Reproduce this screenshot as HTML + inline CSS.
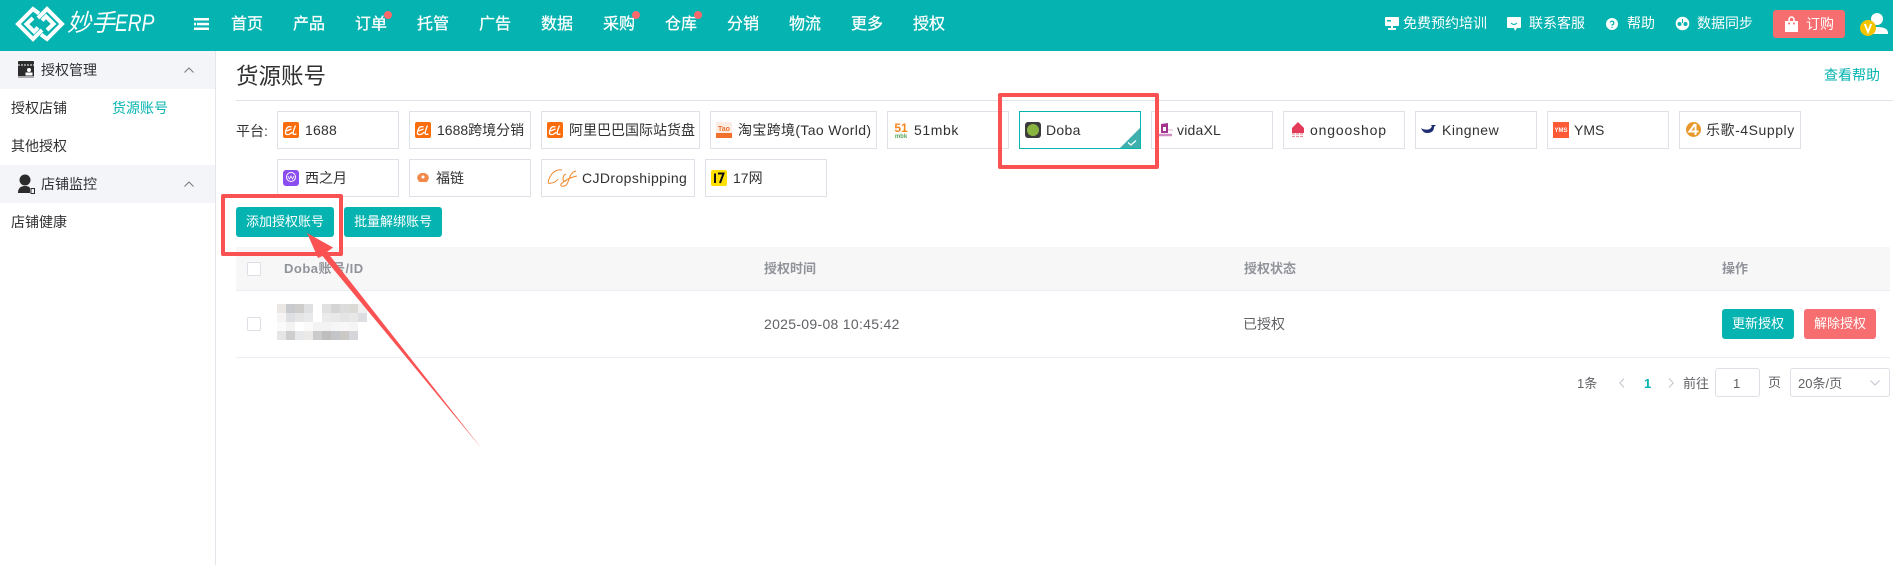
<!DOCTYPE html>
<html lang="zh"><head><meta charset="utf-8"><title>货源账号</title>
<style>
html,body{margin:0;padding:0;width:1893px;height:565px;overflow:hidden;background:#fff}
body{position:relative;font-family:"Liberation Sans","Noto Sans CJK SC",sans-serif;font-size:14px;color:#303133}
.a{position:absolute}
.t{position:absolute;white-space:nowrap;line-height:20px;height:20px}
.n{position:absolute;top:15px;color:#fff;font-size:16px;line-height:20px;white-space:nowrap;-webkit-text-stroke:.25px #fff}
.w{color:#fff}
.tile{position:absolute;height:36px;border:1px solid #dfe1e8;background:#fff}
.dot{position:absolute;width:8px;height:8px;border-radius:50%;background:#f7696b;top:11px}
.btn{position:absolute;height:30px;line-height:30px;text-align:center;color:#fff;font-size:13px;border-radius:3px;background:#05b3b0}
.g{color:#909399;font-weight:bold;font-size:13px}
.cb{position:absolute;width:12px;height:12px;border:1px solid #dcdfe6;border-radius:2px;background:#fff}
svg{position:absolute;overflow:visible}
</style></head><body>

<!-- header -->
<div class="a" style="left:0;top:0;width:1893px;height:51px;background:#05b3b0"></div>
<svg style="left:0;top:0" width="80" height="51" fill="none" stroke="#fff" stroke-width="4"><path d="M39 13.500 33 9 18 24 33 39 42 30 M33 18 26.500 24 34 31.500 38 27.500"/><path d="M41 34.500 47 39 62 24 47 9 38 18 M47 30 53.500 24 46 16.500 42 20.500"/></svg>
<div class="t w" style="left:67px;top:10px;height:28px;line-height:28px;font-size:24px;font-style:italic">妙手<span style="display:inline-block;transform:scaleX(.8);transform-origin:0 50%;font-size:24px">ERP</span></div>
<svg style="left:194px;top:18px" width="15" height="12" fill="#fff"><rect x="0" y="0" width="15" height="2.500"/><rect x="3" y="4.800" width="12" height="2.500"/><rect x="0" y="4.800" width="2" height="2.500"/><rect x="0" y="9.500" width="15" height="2.500"/></svg>
<div class="n" style="left:231px">首页</div><div class="n" style="left:293px">产品</div><div class="n" style="left:355px">订单</div><div class="n" style="left:417px">托管</div><div class="n" style="left:479px">广告</div><div class="n" style="left:541px">数据</div><div class="n" style="left:603px">采购</div><div class="n" style="left:665px">仓库</div><div class="n" style="left:727px">分销</div><div class="n" style="left:789px">物流</div><div class="n" style="left:851px">更多</div><div class="n" style="left:913px">授权</div>
<div class="dot" style="left:384px"></div><div class="dot" style="left:632px"></div><div class="dot" style="left:694px"></div>

<svg style="left:1385px;top:17px" width="14" height="13" fill="#fff"><rect x="0" y="0" width="14" height="9" rx="1"/><rect x="6" y="9" width="2" height="2"/><rect x="3" y="11" width="8" height="2"/><rect x="2" y="3" width="4" height="1.500" fill="#05b3b0"/></svg>
<div class="t w" style="left:1403px;top:13px">免费预约培训</div>
<svg style="left:1507px;top:17px" width="14" height="14" fill="#fff"><path d="M1 0H13A1 1 0 0 1 14 1V10A1 1 0 0 1 13 11H10L8 14 7 11H1A1 1 0 0 1 0 10V1A1 1 0 0 1 1 0Z"/><path d="M4 6Q7 9 10 6" stroke="#05b3b0" stroke-width="1.200" fill="none"/></svg>
<div class="t w" style="left:1529px;top:13px">联系客服</div>
<svg style="left:1606px;top:18px" width="12" height="12"><circle cx="6" cy="6" r="6" fill="#fff"/><path d="M4.300 4.500A1.800 1.800 0 1 1 6 6.800V7.500M6 8.800V10" stroke="#05b3b0" stroke-width="1.200" fill="none"/></svg>
<div class="t w" style="left:1627px;top:13px">帮助</div>
<svg style="left:1675px;top:17px" width="15" height="14"><circle cx="7.500" cy="6.500" r="6.800" fill="#fff"/><circle cx="4.500" cy="7" r="2" fill="#05b3b0"/><circle cx="10.500" cy="7" r="2" fill="#05b3b0"/><path d="M7.500 2V6" stroke="#05b3b0" stroke-width="1"/></svg>
<div class="t w" style="left:1697px;top:13px">数据同步</div>
<div class="a" style="left:1773px;top:10px;width:72px;height:28px;background:#f76e70;border-radius:3px"></div>
<svg style="left:1785px;top:17px" width="13" height="15"><path d="M0 4H13V15H0Z" fill="#fff"/><path d="M4 6V2.500A2.500 2.500 0 0 1 9 2.500V6" stroke="#fff" stroke-width="1.500" fill="none"/><circle cx="4" cy="6.500" r="1" fill="#f76e70"/><circle cx="9" cy="6.500" r="1" fill="#f76e70"/></svg>
<div class="t w" style="left:1806px;top:14px">订购</div>
<svg style="left:1859px;top:12px" width="30" height="26"><circle cx="18" cy="7" r="6" fill="#fff"/><path d="M10 21Q10 15 18 15Q29 15 29 21V22H10Z" fill="#fff"/><circle cx="9" cy="16" r="8" fill="#f5c400"/><path d="M5.800 12 9 20 12.200 12" stroke="#fff" stroke-width="1.800" fill="none"/></svg>

<!-- sidebar -->
<div class="a" style="left:215px;top:51px;width:1px;height:514px;background:#e3e5ea"></div>
<div class="a" style="left:0;top:51px;width:215px;height:38px;background:#f4f5f9"></div>
<div class="a" style="left:0;top:165px;width:215px;height:38px;background:#f4f5f9"></div>
<svg style="left:18px;top:61px" width="16" height="17"><rect width="16" height="17" rx="1" fill="#2b2b2b"/><path d="M0 4H16" stroke="#fff" stroke-dasharray="2 1" stroke-width="1"/><circle cx="11" cy="9" r="2" fill="#fff"/><rect x="7.500" y="11.500" width="7" height="3" fill="#fff"/><rect y="15" width="16" height="2" fill="#aaa"/></svg>
<div class="t" style="left:41px;top:60px;color:#303133">授权管理</div>
<svg style="left:184px;top:67px" width="10" height="6" fill="none" stroke="#777"><path d="M.5 5.500 5 1 9.500 5.500"/></svg>
<div class="t" style="left:11px;top:98px">授权店铺</div>
<div class="t" style="left:112px;top:98px;color:#05b3b0">货源账号</div>
<div class="t" style="left:11px;top:136px">其他授权</div>
<svg style="left:17px;top:174px" width="18" height="20"><circle cx="8" cy="6" r="5.500" fill="#2b2b2b"/><path d="M1 19Q1 12 8 12Q12 12 13 14V19Z" fill="#2b2b2b"/><rect x="14" y="14.500" width="3.500" height="5" fill="none" stroke="#2b2b2b"/></svg>
<div class="t" style="left:41px;top:174px">店铺监控</div>
<svg style="left:184px;top:181px" width="10" height="6" fill="none" stroke="#777"><path d="M.5 5.500 5 1 9.500 5.500"/></svg>
<div class="t" style="left:11px;top:212px">店铺健康</div>

<!-- title -->
<div class="t" style="left:236px;top:62px;height:30px;line-height:30px;font-size:22.500px;color:#303133">货源账号</div>
<div class="t" style="left:1824px;top:65px;color:#05b3b0">查看帮助</div>
<div class="a" style="left:236px;top:100px;width:1657px;height:1px;background:#e1e3ea"></div>

<!-- platforms -->
<div class="t" style="left:236px;top:121px">平台:</div>
<div class="tile" style="left:277px;top:111px;width:120px"></div>
<div class="tile" style="left:409px;top:111px;width:120px"></div>
<div class="tile" style="left:541px;top:111px;width:157px"></div>
<div class="tile" style="left:710px;top:111px;width:165px"></div>
<div class="tile" style="left:887px;top:111px;width:120px"></div>
<div class="tile" style="left:1019px;top:111px;width:120px;border-color:#05b3b0"></div>
<div class="tile" style="left:1151px;top:111px;width:120px"></div>
<div class="tile" style="left:1283px;top:111px;width:120px"></div>
<div class="tile" style="left:1415px;top:111px;width:120px"></div>
<div class="tile" style="left:1547px;top:111px;width:120px"></div>
<div class="tile" style="left:1679px;top:111px;width:120px"></div>
<div class="tile" style="left:277px;top:159px;width:120px"></div>
<div class="tile" style="left:409px;top:159px;width:120px"></div>
<div class="tile" style="left:541px;top:159px;width:152px"></div>
<div class="tile" style="left:705px;top:159px;width:120px"></div>

<svg style="left:283px;top:122px" width="16" height="16"><rect width="16" height="16" rx="2" fill="#fb6d0b"/><path d="M8.500 5Q4.500 3.500 3 8T4 12.500Q7 13 9 10M3.500 9 8.500 7M12.500 3.500Q10.500 8 10 11.500Q10.500 13 13.500 12" stroke="#fff" stroke-width="1.300" fill="none"/></svg>
<div class="t" style="left:305px;top:120px;letter-spacing:.2px">1688</div>
<svg style="left:415px;top:122px" width="16" height="16"><rect width="16" height="16" rx="2" fill="#fb6d0b"/><path d="M8.500 5Q4.500 3.500 3 8T4 12.500Q7 13 9 10M3.500 9 8.500 7M12.500 3.500Q10.500 8 10 11.500Q10.500 13 13.500 12" stroke="#fff" stroke-width="1.300" fill="none"/></svg>
<div class="t" style="left:437px;top:120px">1688跨境分销</div>
<svg style="left:547px;top:122px" width="16" height="16"><rect width="16" height="16" rx="2" fill="#fb6d0b"/><path d="M8.500 5Q4.500 3.500 3 8T4 12.500Q7 13 9 10M3.500 9 8.500 7M12.500 3.500Q10.500 8 10 11.500Q10.500 13 13.500 12" stroke="#fff" stroke-width="1.300" fill="none"/></svg>
<div class="t" style="left:569px;top:120px">阿里巴巴国际站货盘</div>
<svg style="left:716px;top:122px" width="16" height="16"><rect width="16" height="16" fill="#fdece3"/><text x="8" y="9" font-size="7" text-anchor="middle" fill="#f0702c" font-family="Liberation Sans" font-weight="bold">Tao</text><rect y="11" width="16" height="5" fill="#f0702c"/></svg>
<div class="t" style="left:738px;top:120px;letter-spacing:.35px">淘宝跨境(Tao World)</div>
<svg style="left:894px;top:122px" width="14" height="16"><text x="7" y="10" font-size="12" text-anchor="middle" fill="#f5861f" font-family="Liberation Sans" font-weight="bold">51</text><text x="7" y="16" font-size="6" text-anchor="middle" fill="#58a55c" font-family="Liberation Sans" font-weight="bold">mbk</text></svg>
<div class="t" style="left:914px;top:120px;letter-spacing:.6px">51mbk</div>
<svg style="left:1025px;top:122px" width="16" height="16"><rect width="16" height="16" rx="3" fill="#3c3c3c"/><circle cx="8" cy="8" r="6" fill="#8ab540"/></svg>
<div class="t" style="left:1046px;top:120px;letter-spacing:.3px">Doba</div>
<svg style="left:1120px;top:128px" width="20" height="20"><path d="M20 0V20H0Z" fill="#3fb0ae"/><path d="M8 14.500 11 17 16 12.500" stroke="#fff" stroke-width="1.300" fill="none"/></svg>
<svg style="left:1158px;top:122px" width="16" height="16"><path d="M3 2 10 1 10 11 3 11Z" fill="#a4358e"/><path d="M5 5H8V9H5Z" fill="#fff"/><path d="M0 13H14" stroke="#d28cc4" stroke-width="2.500"/><path d="M10 8H15" stroke="#e8a9d4"/></svg>
<div class="t" style="left:1177px;top:120px;letter-spacing:.2px">vidaXL</div>
<svg style="left:1291px;top:122px" width="14" height="16"><path d="M7 0 13 6V11H1V6Z" fill="#e43a5a"/><path d="M1 12H13M1 14.500H13" stroke="#ea8f9f" stroke-width="1.200" stroke-dasharray="3 1"/></svg>
<div class="t" style="left:1310px;top:120px;letter-spacing:.85px">ongooshop</div>
<svg style="left:1421px;top:124px" width="16" height="12"><path d="M0 4Q3 6 7 5.500Q10 5 11 2L9.500 1H15L13 3Q13 9 6 9Q2 9 0 4Z" fill="#1f2d73"/></svg>
<div class="t" style="left:1442px;top:120px;letter-spacing:.5px">Kingnew</div>
<svg style="left:1553px;top:122px" width="16" height="16"><rect width="16" height="16" fill="#fd5a35"/><text x="8" y="10" font-size="6" text-anchor="middle" fill="#fff" font-family="Liberation Sans" font-weight="bold">YMS</text></svg>
<div class="t" style="left:1574px;top:120px">YMS</div>
<svg style="left:1686px;top:122px" width="15" height="15"><circle cx="7.500" cy="7.500" r="7.500" fill="#e8982a"/><path d="M9 2 3.500 9.500H12.500M9.500 2V13" stroke="#fff" stroke-width="2" fill="none"/></svg>
<div class="t" style="left:1706px;top:120px;letter-spacing:.55px">乐歌-4Supply</div>

<svg style="left:283px;top:170px" width="16" height="16"><rect width="16" height="16" rx="3" fill="#8a4df0"/><circle cx="8" cy="7" r="4.500" fill="none" stroke="#fff"/><path d="M5 6 6.500 9 8 6 9.500 9 11 6" stroke="#fff" stroke-width=".8" fill="none"/></svg>
<div class="t" style="left:305px;top:168px">西之月</div>
<svg style="left:417px;top:173px" width="12" height="10"><path d="M1 2 4 0H8L11 2 12 5 10 9H2L0 5Z" fill="#f0894a"/><circle cx="6" cy="4" r="1.500" fill="#fff"/></svg>
<div class="t" style="left:436px;top:168px">福链</div>
<svg style="left:547px;top:168px" width="31" height="20" fill="none" stroke="#f08a2c" stroke-width="1"><path d="M15 2Q7 1 3 9T4 15Q8 15 11 11M29 3Q24 4 22 11T17 18Q13 19 14 16Q20 10 30 8"/><path d="M19 6Q16 7 16 11T20 12"/></svg>
<div class="t" style="left:582px;top:168px;letter-spacing:.4px">CJDropshipping</div>
<svg style="left:711px;top:170px" width="16" height="16"><rect width="16" height="16" rx="2" fill="#ffe000"/><path d="M4 3.500V13M7 3.500H12.500L9 13" stroke="#111" stroke-width="2" fill="none"/></svg>
<div class="t" style="left:733px;top:168px">17网</div>

<!-- buttons -->
<div class="btn" style="left:236px;top:207px;width:98px">添加授权账号</div>
<div class="btn" style="left:344px;top:207px;width:98px">批量解绑账号</div>

<!-- table -->
<div class="a" style="left:236px;top:247px;width:1654px;height:43px;background:#f7f7f8"></div>
<div class="a" style="left:236px;top:290px;width:1654px;height:1px;background:#ebeef5"></div>
<div class="a" style="left:236px;top:357px;width:1654px;height:1px;background:#ebeef5"></div>
<div class="cb" style="left:247px;top:262px"></div>
<div class="t g" style="left:284px;top:259px;letter-spacing:.5px">Doba账号/ID</div>
<div class="t g" style="left:764px;top:259px">授权时间</div>
<div class="t g" style="left:1244px;top:259px">授权状态</div>
<div class="t g" style="left:1722px;top:259px">操作</div>
<div class="cb" style="left:247px;top:317px"></div>

<svg style="left:277px;top:304px" width="90" height="36" shape-rendering="crispEdges">
<rect x="0" y="0" width="9" height="9" fill="#ebe7e4"/><rect x="9" y="0" width="9" height="9" fill="#c9cace"/><rect x="18" y="0" width="9" height="9" fill="#cfcdcb"/><rect x="27" y="0" width="9" height="9" fill="#dfe0e2"/><rect x="45" y="0" width="9" height="9" fill="#e1e1e1"/><rect x="54" y="0" width="9" height="9" fill="#d5d4d4"/><rect x="63" y="0" width="9" height="9" fill="#dcdcdc"/><rect x="72" y="0" width="9" height="9" fill="#dcdad7"/><rect x="81" y="0" width="9" height="9" fill="#f0f0f0"/>
<rect x="0" y="9" width="9" height="9" fill="#f5f3f3"/><rect x="9" y="9" width="9" height="9" fill="#dedfe2"/><rect x="18" y="9" width="9" height="9" fill="#e6e5e5"/><rect x="27" y="9" width="9" height="9" fill="#e8e9eb"/><rect x="45" y="9" width="9" height="9" fill="#ecebeb"/><rect x="54" y="9" width="9" height="9" fill="#e9e9e9"/><rect x="63" y="9" width="9" height="9" fill="#e4e4e4"/><rect x="72" y="9" width="9" height="9" fill="#e9e8e8"/><rect x="81" y="9" width="9" height="9" fill="#dcdee1"/>
<rect x="0" y="18" width="9" height="9" fill="#fbfafa"/><rect x="9" y="18" width="9" height="9" fill="#f3f3f4"/><rect x="27" y="18" width="9" height="9" fill="#fafafa"/><rect x="36" y="18" width="9" height="9" fill="#f4f3f3"/><rect x="45" y="18" width="9" height="9" fill="#f3f3f3"/><rect x="54" y="18" width="9" height="9" fill="#f6f6f6"/><rect x="63" y="18" width="9" height="9" fill="#f8f8f8"/><rect x="72" y="18" width="9" height="9" fill="#f5f5f5"/>
<rect x="0" y="27" width="9" height="9" fill="#e7e6e6"/><rect x="9" y="27" width="9" height="9" fill="#cfcecd"/><rect x="18" y="27" width="9" height="9" fill="#e6e8ea"/><rect x="27" y="27" width="9" height="9" fill="#ebeae8"/><rect x="36" y="27" width="9" height="9" fill="#cbcbcb"/><rect x="45" y="27" width="9" height="9" fill="#c0bebd"/><rect x="54" y="27" width="9" height="9" fill="#c4c5c8"/><rect x="63" y="27" width="9" height="9" fill="#cbc8c5"/><rect x="72" y="27" width="9" height="9" fill="#d4d6d9"/>
</svg>

<div class="t" style="left:764px;top:314px;color:#606266;letter-spacing:.3px">2025-09-08 10:45:42</div>
<div class="t" style="left:1243px;top:314px;color:#606266">已授权</div>
<div class="btn" style="left:1722px;top:309px;width:72px">更新授权</div>
<div class="btn" style="left:1804px;top:309px;width:72px;background:#f76e70">解除授权</div>

<!-- pagination -->
<div class="t" style="left:1577px;top:374px;font-size:13px;color:#606266">1条</div>
<svg style="left:1619px;top:378px" width="6" height="10" fill="none" stroke="#c0c4cc"><path d="M5 .5 .8 5 5 9.500"/></svg>
<div class="t" style="left:1644px;top:374px;font-size:13px;font-weight:bold;color:#05b3b0">1</div>
<svg style="left:1668px;top:378px" width="6" height="10" fill="none" stroke="#c0c4cc"><path d="M1 .5 5.200 5 1 9.500"/></svg>
<div class="t" style="left:1683px;top:374px;font-size:13px;color:#606266">前往</div>
<div class="a" style="left:1715px;top:368px;width:43px;height:27px;border:1px solid #dcdfe6;border-radius:3px"></div>
<div class="t" style="left:1733px;top:374px;font-size:13px;color:#606266">1</div>
<div class="t" style="left:1768px;top:373px;font-size:13px;color:#606266">页</div>
<div class="a" style="left:1790px;top:368px;width:98px;height:27px;border:1px solid #dcdfe6;border-radius:3px"></div>
<div class="t" style="left:1798px;top:374px;font-size:13px;color:#606266">20条/页</div>
<svg style="left:1870px;top:380px" width="10" height="6" fill="none" stroke="#c0c4cc"><path d="M.5 .5 5 5 9.500 .5"/></svg>

<!-- annotations -->
<svg style="left:0;top:0" width="1893" height="565">
<rect x="1000" y="95" width="157" height="72" fill="none" stroke="#fa5252" stroke-width="4" stroke-linejoin="round"/>
<rect x="223" y="196" width="118" height="58" fill="none" stroke="#fa5252" stroke-width="4" stroke-linejoin="round"/>
<path d="M307 233 333 247.500 327 252 482 449 322.500 256 318 258Z" fill="#fa5252"/>
</svg>
</body></html>
